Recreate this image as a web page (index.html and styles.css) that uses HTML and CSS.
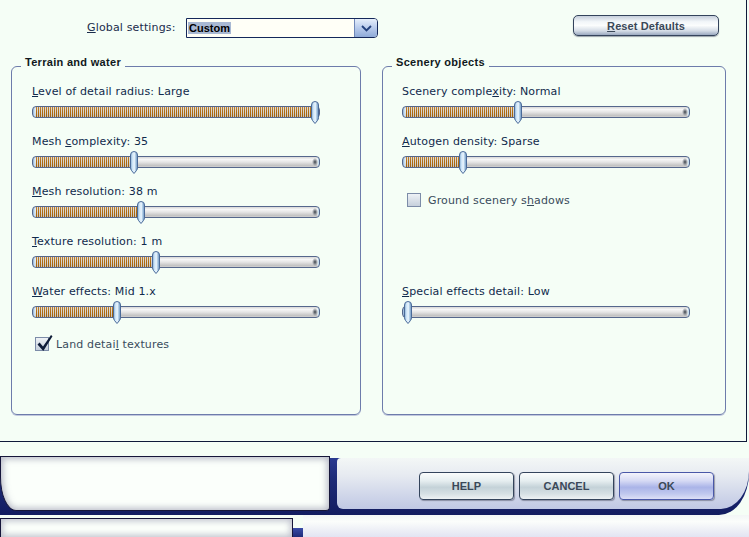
FILE: index.html
```html
<!DOCTYPE html>
<html lang="en">
<head>
<meta charset="utf-8">
<title>Display settings – Scenery</title>
<link rel="stylesheet" href="styles.css">
</head>
<body>
<svg class="defs" width="0" height="0" aria-hidden="true">
  <defs>
    <linearGradient id="thumbFill" x1="0" y1="0" x2="1" y2="0">
      <stop offset="0" stop-color="#86acd0"/>
      <stop offset="0.3" stop-color="#cfe6f8"/>
      <stop offset="0.55" stop-color="#eaf5fd"/>
      <stop offset="0.75" stop-color="#a6c6e2"/>
      <stop offset="1" stop-color="#6a90bc"/>
    </linearGradient>
  </defs>
</svg>

<div class="settings">
  <div class="topbar">
    <span class="field-label"><u>G</u>lobal settings:</span>
    <div class="combo">
      <span class="combo-value">Custom</span>
      <span class="combo-arrow">
        <svg width="11" height="7" viewBox="0 0 11 7"><polyline points="1,1 5.5,5.5 10,1" fill="none" stroke="#22407c" stroke-width="1.8"/></svg>
      </span>
    </div>
    <button class="btn reset"><u>R</u>eset Defaults</button>
  </div>

  <div class="groups">
    <section class="group group-left">
      <h2 class="group-title">Terrain and water</h2>

      <div class="slider-row">
        <div class="slider-label"><u>L</u>evel of detail radius: Large</div>
        <div class="slider">
          <div class="track"><div class="fill" style="width:277px"></div></div>
          <svg class="thumb" style="left:278px" width="10" height="23" viewBox="0 0 10 23"><path d="M1.5 4Q1.5 .5 5 .5Q8.5 .5 8.5 4L8.5 16.5Q8.5 18 7.5 19.5L5 22.5L2.5 19.5Q1.5 18 1.5 16.5Z" fill="url(#thumbFill)" stroke="#4a6a98"/></svg>
        </div>
      </div>

      <div class="slider-row">
        <div class="slider-label">Mesh <u>c</u>omplexity: 35</div>
        <div class="slider">
          <div class="track"><div class="fill" style="width:96px"></div></div>
          <svg class="thumb" style="left:97px" width="10" height="23" viewBox="0 0 10 23"><path d="M1.5 4Q1.5 .5 5 .5Q8.5 .5 8.5 4L8.5 16.5Q8.5 18 7.5 19.5L5 22.5L2.5 19.5Q1.5 18 1.5 16.5Z" fill="url(#thumbFill)" stroke="#4a6a98"/></svg>
        </div>
      </div>

      <div class="slider-row">
        <div class="slider-label"><u>M</u>esh resolution: 38 m</div>
        <div class="slider">
          <div class="track"><div class="fill" style="width:103px"></div></div>
          <svg class="thumb" style="left:104px" width="10" height="23" viewBox="0 0 10 23"><path d="M1.5 4Q1.5 .5 5 .5Q8.5 .5 8.5 4L8.5 16.5Q8.5 18 7.5 19.5L5 22.5L2.5 19.5Q1.5 18 1.5 16.5Z" fill="url(#thumbFill)" stroke="#4a6a98"/></svg>
        </div>
      </div>

      <div class="slider-row">
        <div class="slider-label"><u>T</u>exture resolution: 1 m</div>
        <div class="slider">
          <div class="track"><div class="fill" style="width:118px"></div></div>
          <svg class="thumb" style="left:119px" width="10" height="23" viewBox="0 0 10 23"><path d="M1.5 4Q1.5 .5 5 .5Q8.5 .5 8.5 4L8.5 16.5Q8.5 18 7.5 19.5L5 22.5L2.5 19.5Q1.5 18 1.5 16.5Z" fill="url(#thumbFill)" stroke="#4a6a98"/></svg>
        </div>
      </div>

      <div class="slider-row">
        <div class="slider-label"><u>W</u>ater effects: Mid 1.x</div>
        <div class="slider">
          <div class="track"><div class="fill" style="width:79px"></div></div>
          <svg class="thumb" style="left:80px" width="10" height="23" viewBox="0 0 10 23"><path d="M1.5 4Q1.5 .5 5 .5Q8.5 .5 8.5 4L8.5 16.5Q8.5 18 7.5 19.5L5 22.5L2.5 19.5Q1.5 18 1.5 16.5Z" fill="url(#thumbFill)" stroke="#4a6a98"/></svg>
        </div>
      </div>

      <label class="check-row check-land">
        <span class="box">
          <svg class="tick" width="17" height="18" viewBox="0 0 17 18"><path d="M1.5 10.5L3.6 8.6L7 12.6L15 1L16.5 2.2L7.3 17Z" fill="#0e1c38"/></svg>
        </span>
        <span>Land detai<u>l</u> textures</span>
      </label>
    </section>

    <section class="group group-right">
      <h2 class="group-title">Scenery objects</h2>

      <div class="slider-row">
        <div class="slider-label">Scenery comple<u>x</u>ity: Normal</div>
        <div class="slider">
          <div class="track"><div class="fill" style="width:110px"></div></div>
          <svg class="thumb" style="left:111px" width="10" height="23" viewBox="0 0 10 23"><path d="M1.5 4Q1.5 .5 5 .5Q8.5 .5 8.5 4L8.5 16.5Q8.5 18 7.5 19.5L5 22.5L2.5 19.5Q1.5 18 1.5 16.5Z" fill="url(#thumbFill)" stroke="#4a6a98"/></svg>
        </div>
      </div>

      <div class="slider-row">
        <div class="slider-label"><u>A</u>utogen density: Sparse</div>
        <div class="slider">
          <div class="track"><div class="fill" style="width:55px"></div></div>
          <svg class="thumb" style="left:56px" width="10" height="23" viewBox="0 0 10 23"><path d="M1.5 4Q1.5 .5 5 .5Q8.5 .5 8.5 4L8.5 16.5Q8.5 18 7.5 19.5L5 22.5L2.5 19.5Q1.5 18 1.5 16.5Z" fill="url(#thumbFill)" stroke="#4a6a98"/></svg>
        </div>
      </div>

      <label class="check-row check-shadows">
        <span class="box"></span>
        <span>Ground scenery s<u>h</u>adows</span>
      </label>

      <div class="slider-row effects-row">
        <div class="slider-label"><u>S</u>pecial effects detail: Low</div>
        <div class="slider">
          <div class="track"><div class="fill" style="width:0"></div></div>
          <svg class="thumb" style="left:1px" width="10" height="23" viewBox="0 0 10 23"><path d="M1.5 4Q1.5 .5 5 .5Q8.5 .5 8.5 4L8.5 16.5Q8.5 18 7.5 19.5L5 22.5L2.5 19.5Q1.5 18 1.5 16.5Z" fill="url(#thumbFill)" stroke="#4a6a98"/></svg>
        </div>
      </div>
    </section>
  </div>
</div>

<div class="chrome">
  <div class="dock">
    <div class="dock-panel"></div>
    <div class="dock-bar">
      <button class="btn action">HELP</button>
      <button class="btn action">CANCEL</button>
      <button class="btn action primary">OK</button>
    </div>
  </div>
  <div class="dock2">
    <div class="dock2-panel"></div>
    <div class="dock2-notch"></div>
    <div class="dock2-bar"></div>
  </div>
</div>
</body>
</html>
```

FILE: styles.css
```css
* {
  box-sizing: border-box;
}

html,
body {
  margin: 0;
  padding: 0;
}

body {
  width: 749px;
  height: 537px;
  overflow: hidden;
  background: #f5fef6;
  font-family: "DejaVu Sans", sans-serif;
  font-size: 11px;
  letter-spacing: 0.15px;
  color: #102a4c;
}

.defs {
  display: block;
  width: 0;
  height: 0;
}

/* ---------- main settings pane ---------- */

.settings {
  width: 747px;
  height: 442px;
  border-right: 1px solid #0f1a3a;
  border-bottom: 1px solid #0f1a3a;
}

.topbar {
  display: flex;
  align-items: flex-start;
  height: 66px;
  padding: 15px 0 0 87px;
}

.field-label {
  width: 99px;
  margin-top: 6px;
  line-height: 14px;
  color: #1a2c4c;
}

.combo {
  display: flex;
  align-items: center;
  width: 192px;
  height: 20px;
  margin-top: 3px;
  border: 1px solid #14285a;
  border-radius: 0 4px 4px 0;
  background: #fffff7;
  letter-spacing: 0;
}

.combo-value {
  margin-left: 1px;
  padding: 0 1px;
  line-height: 12px;
  background: #a9b9d3;
  font: bold 11px "Liberation Sans", sans-serif;
  color: #000;
}

.combo-arrow {
  display: flex;
  align-items: center;
  justify-content: center;
  width: 23px;
  height: 100%;
  margin-left: auto;
  border-left: 1px solid #7088b8;
  border-radius: 0 3px 3px 0;
  background: linear-gradient(#e6effb, #b8cbec 50%, #8eaad8);
}

.btn {
  padding: 0;
  font: bold 11px "Liberation Sans", sans-serif;
  letter-spacing: 0;
  color: #3a4858;
  border: 1px solid #34445c;
  border-radius: 4px;
  cursor: pointer;
}

.reset {
  width: 146px;
  height: 21px;
  margin-left: 195px;
  border-radius: 5px;
  letter-spacing: 0.1px;
  box-shadow: 0 1px 1px rgba(20, 30, 60, 0.4);
  background: linear-gradient(#c6cfdc, #f2f6f9 30%, #fbfdfd 50%, #d4dce6 78%, #9aa9c0);
}

/* ---------- option groups ---------- */

.groups {
  display: flex;
  gap: 21px;
  padding-left: 11px;
}

.group {
  position: relative;
  height: 349px;
  padding: 18px 0 0 20px;
  border: 1px solid #6d7cab;
  border-radius: 6px;
  box-shadow: 0 1px 0 #c2c9de;
}

.group-left {
  width: 350px;
}

.group-right {
  width: 344px;
  padding-left: 19px;
}

.group-title {
  position: absolute;
  top: -12px;
  left: 9px;
  margin: 0;
  padding: 0 4px;
  background: #f5fef6;
  font: bold 11px/14px "Liberation Sans", sans-serif;
  letter-spacing: 0.3px;
  color: #101820;
}

.slider-row {
  margin-bottom: 12px;
}

.slider-label {
  line-height: 14px;
}

.slider {
  position: relative;
  display: flow-root;
  width: 288px;
  height: 22px;
  margin-top: 2px;
}

.track {
  height: 12px;
  margin-top: 5px;
  padding-left: 3px;
  border: 1px solid #55678c;
  border-radius: 4px;
  background:
    radial-gradient(ellipse 3px 4px at calc(100% - 4px) 50%, #3a424a, rgba(120, 126, 134, 0.6) 60%, transparent),
    linear-gradient(270deg, #a6cfe8 0, #e4f2fa 1px, transparent 2px),
    linear-gradient(90deg, #8eb0d4 0, #dcecf8 2px, transparent 3px),
    linear-gradient(#d8d8d8, #f6f6f6 25%, #e6e6e6 50%, #c4c4c4 85%, #d0d0d0);
}

.fill {
  height: 100%;
  background:
    linear-gradient(rgba(255, 255, 255, 0.15), transparent 45%, rgba(40, 30, 20, 0.12)),
    repeating-linear-gradient(90deg, #b06c10 0 1px, #d8d6d0 1px 2px);
}

.thumb {
  position: absolute;
  top: 0;
  display: block;
}

/* ---------- check boxes ---------- */

.check-row {
  display: flex;
  align-items: center;
  gap: 7px;
  height: 14px;
  color: #3a4c5c;
}

/* margins below are measured from the previous slider row, whose
   12px bottom margin collapses into them */
.check-land {
  margin-top: 14px;
  padding-left: 3px;
}

.check-shadows {
  margin-top: 20px;
  padding-left: 5px;
}

.box {
  position: relative;
  flex: none;
  width: 14px;
  height: 14px;
  border: 1px solid #7c8ca8;
  background: linear-gradient(#eef2f6, #c6d0dc);
}

.tick {
  position: absolute;
  left: 0;
  top: -4px;
}

.effects-row {
  margin-top: 78px;
}

/* ---------- window chrome below the pane ---------- */

.chrome {
  height: 95px;
}

.dock {
  display: flex;
  height: 60px;
  margin-top: 13px;
  border-bottom-right-radius: 30px 42px;
  background: linear-gradient(transparent 3px, #2a3a90 3px, #1d2b78 40%, #121c60);
}

.dock-panel {
  width: 330px;
  height: 55px;
  margin-top: 1px;
  border: 1px solid #16163a;
  border-radius: 0 0 4px 16px / 0 0 4px 34px;
  background: #fbfffb;
  box-shadow: inset 0 0 6px 2px rgba(120, 120, 150, 0.5);
}

.dock-bar {
  display: flex;
  flex: 1;
  gap: 5px;
  height: 51px;
  margin: 3px 0 0 7px;
  padding: 14px 0 0 82px;
  border-radius: 4px 0 28px 6px / 4px 0 38px 6px;
  background: linear-gradient(#f3f7f6, #e6eaf1 35%, #c0c8e4);
}

.action {
  width: 95px;
  height: 28px;
  box-shadow: 1px 1px 1px rgba(20, 20, 40, 0.35);
  background: linear-gradient(#fafcfc, #e6eef0 30%, #c4d2d8 55%, #d6e0e4 80%, #eef2f4);
}

.primary {
  border-color: #4a58a8;
  background: linear-gradient(#f4f4fc, #d6daf4 30%, #aab4e8 55%, #c0c8ee 80%, #dde0f6);
}

.dock2 {
  display: flex;
  height: 22px;
}

.dock2-panel {
  width: 293px;
  margin-top: 3px;
  border: 1px solid #16163a;
  border-bottom: 0;
  background: #fbfffb;
  box-shadow: inset 0 0 6px 2px rgba(120, 120, 150, 0.45);
}

.dock2-notch {
  width: 10px;
  margin-top: 13px;
  background: linear-gradient(#3a4ca8, #1d2b78);
}

.dock2-bar {
  flex: 1;
  background: linear-gradient(#f2f6f6, #fbfdfb 30%, #e2e4f2);
}
```
